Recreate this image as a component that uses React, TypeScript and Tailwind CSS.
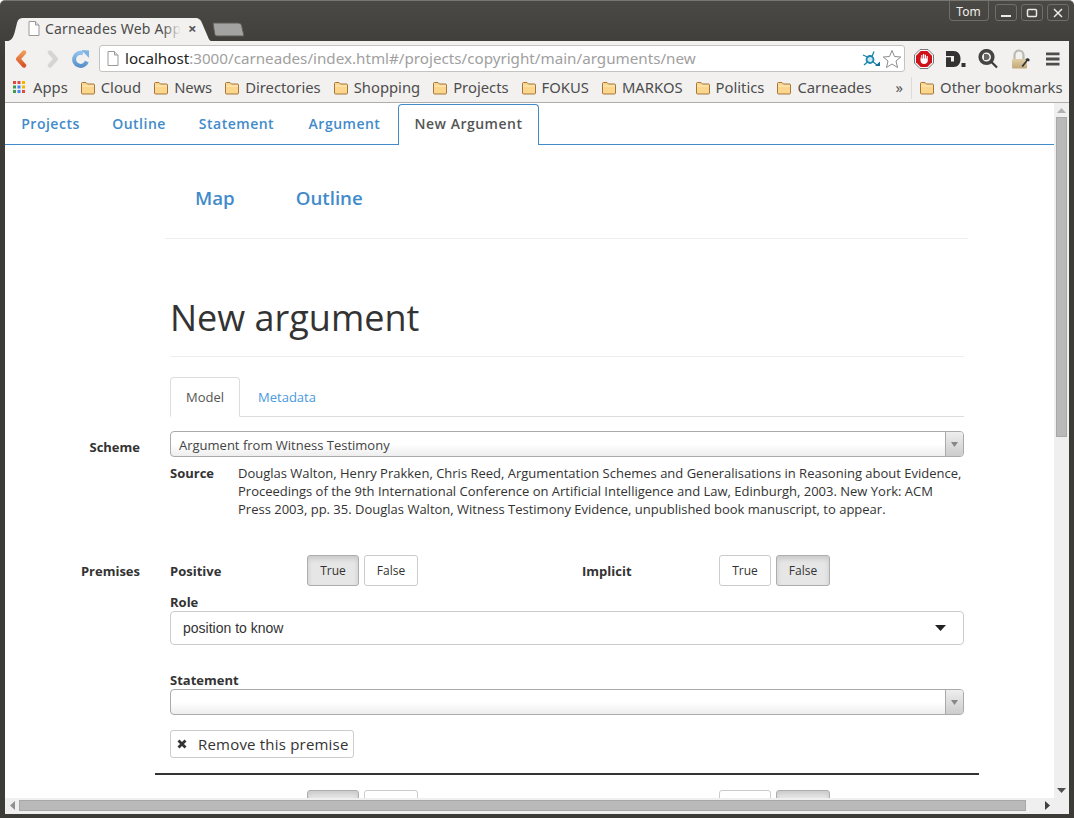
import React from "react";

const ui = "font-['Noto_Sans','Open_Sans',sans-serif]";

function Folder() {
  return (
    <svg width="16" height="14" viewBox="0 0 16 14" className="shrink-0">
      <path d="M1.5 12V2.5C1.5 1.900 1.900 1.5 2.500 1.5H6L7.500 3H13.500C14.100 3 14.500 3.400 14.500 4V12C14.500 12.600 14.100 13 13.500 13H2.500C1.900 13 1.500 12.600 1.500 12Z" fill="#fbd68c" stroke="#a5763a" />
      <path d="M2 5H14" stroke="#fdebc4" />
    </svg>
  );
}

function Bookmark({ label, className = "" }: { label: string; className?: string }) {
  return (
    <div className={`flex items-center gap-[5px] ${className}`}>
      <Folder />
      <span>{label}</span>
    </div>
  );
}

function PageIcon({ className = "" }: { className?: string }) {
  return (
    <svg width="12" height="15" viewBox="0 0 12 15" className={className}>
      <path d="M1 .5H7.500L11 4V14.500H1Z" fill="#fff" stroke="#9a9a9a" />
      <path d="M7.500 .5V4H11" fill="#e4e4e4" stroke="#9a9a9a" />
    </svg>
  );
}

function Segmented({ active, labels = true }: { active: "true" | "false"; labels?: boolean }) {
  const on = "bg-[#e6e6e6] border-[#adadad] shadow-[inset_0_3px_5px_rgba(0,0,0,0.125)]";
  const off = "bg-white border-[#cccccc]";
  return (
    <div className="flex gap-[5px]">
      <div className={`w-[52px] h-[31px] border rounded-[3px] flex items-center justify-center ${active === "true" ? on : off}`}>{labels && "True"}</div>
      <div className={`w-[54px] h-[31px] border rounded-[3px] flex items-center justify-center ${active === "false" ? on : off}`}>{labels && "False"}</div>
    </div>
  );
}

function Combo({ value, h }: { value?: string; h: string }) {
  return (
    <div className={`${h} border border-[#aaaaaa] rounded-[4px] flex overflow-hidden bg-gradient-to-b from-white from-50% to-[#eeeeee]`}>
      <div className="flex-1 pl-[8px] pt-[3px] flex items-center text-[13px] text-[#444444]">{value}</div>
      <div className="w-[18px] border-l border-[#aaaaaa] bg-gradient-to-b from-[#eeeeee] to-[#cccccc] flex items-center justify-center">
        <svg width="7" height="5" viewBox="0 0 7 5"><path d="M0 0H7L3.500 5Z" fill="#888888" /></svg>
      </div>
    </div>
  );
}

export default function App() {
  return (
    <div className={`w-[1074px] h-[818px] overflow-hidden bg-gradient-to-b from-[#4a4945] to-[#3c3b37] to-[60px] flex flex-col rounded-t-[5px] border-t border-[#77766f] ${ui}`}>
      {/* title bar */}
      <div className="h-[40px] shrink-0 flex items-start justify-between pr-[5px]">
        <div className="relative ml-[4px] mt-[16px] flex items-start">
          <div className="relative w-[209px] h-[25px]">
            <svg width="209" height="25" viewBox="0 0 209 25" className="absolute left-0 top-0">
              <path d="M0 25C7 24 9 22 11 14L13 6C14 2 16 1 20 1H191C195 1 197 3 198 6L204 20C205 23 206 24 209 25Z" fill="#f2f1f0" />
            </svg>
            <div className="relative flex items-center h-[23px] pl-[24px] pr-[14px] gap-[5px]">
              <PageIcon />
              <div className="relative w-[136px] h-[20px] leading-[19px] overflow-hidden">
                <span className="text-[14px] text-[#4c4c4c] whitespace-nowrap tracking-[0.2px]">Carneades Web App</span>
                <div className="absolute right-0 top-0 bottom-0 w-[18px] bg-gradient-to-r from-transparent to-[#f2f1f0]"></div>
              </div>
              <span className="text-[#555555] text-[15px] leading-none font-bold ml-[2px]">×</span>
            </div>
          </div>
          <svg width="32" height="15" viewBox="0 0 32 15" className="-ml-[1px] mt-[5px]">
            <path d="M1 1H26C28 1 29 2 29.500 3L32 14H5C3 14 3 13 2.500 11Z" fill="#a3a3a1" stroke="#5c5b57" />
          </svg>
        </div>
        <div className="flex items-start text-[12px] text-[#f0efec] gap-[4px]">
          <div className="w-[40px] h-[20px] pt-[2px] pr-[1px] border border-t-0 border-[#6f6e6a] rounded-b-[4px] mr-[2px] flex items-center justify-center">Tom</div>
          {[0, 1, 2].map((i) => (
            <div key={i} className="w-[22px] h-[17px] mt-[3px] border border-[#6f6e6a] rounded-[3px] flex items-center justify-center">
              <svg width="12" height="10" viewBox="0 0 12 10">
                {i === 0 && <path d="M1 8H11" stroke="#ecebe8" strokeWidth="2" />}
                {i === 1 && <rect x="1.500" y="1.500" width="9" height="7" rx="1" fill="none" stroke="#ecebe8" strokeWidth="1.500" />}
                {i === 2 && <path d="M2 1L10 9M10 1L2 9" stroke="#ecebe8" strokeWidth="1.500" />}
              </svg>
            </div>
          ))}
        </div>
      </div>

      {/* window body */}
      <div className="flex-1 min-h-0 ml-[5px] mr-[5px] mb-[4px] flex flex-col bg-[#f2f1f0]">
        {/* toolbar */}
        <div className="h-[35px] shrink-0 flex items-center pl-[10px]">
          <svg width="12" height="18" viewBox="0 0 12 18" className="shrink-0">
            <defs>
              <linearGradient id="backG" x1="0" y1="0" x2="0" y2="1">
                <stop offset="0" stopColor="#ef9a55" />
                <stop offset="1" stopColor="#d9542b" />
              </linearGradient>
            </defs>
            <path d="M9 2.500L3.200 9L9 15.500H8.999" fill="none" stroke="url(#backG)" strokeWidth="4.400" strokeLinecap="round" strokeLinejoin="round" />
          </svg>
          <svg width="12" height="18" viewBox="0 0 12 18" className="ml-[20px] shrink-0">
            <path d="M3 2.500L8.800 9L3 15.500" fill="none" stroke="#d6d5d3" strokeWidth="4.400" strokeLinecap="round" strokeLinejoin="round" />
          </svg>
          <svg width="18" height="18" viewBox="0 0 18 18" className="ml-[13px] shrink-0">
            <defs>
              <linearGradient id="reloadG" x1="0" y1="0" x2="0" y2="1">
                <stop offset="0" stopColor="#8fc0ea" />
                <stop offset="1" stopColor="#5a93cc" />
              </linearGradient>
            </defs>
            <path d="M14.800 11.500A6.500 6.500 0 1 1 11 3.300" fill="none" stroke="url(#reloadG)" strokeWidth="4" />
            <path d="M9.500 0L17 0.500V8Z" fill="#7fb2e0" />
          </svg>
          <div className="ml-[9px] w-[806px] h-[27px] bg-white border border-[#c4c3c0] rounded-[3px] flex items-center pl-[7px] pr-[2px]">
            <PageIcon />
            <div className="ml-[6px] flex-1 text-[15.2px] whitespace-nowrap overflow-hidden text-[#a0a0a0]">
              <span className="text-[#222222]">localhost</span>:3000/carneades/index.html#/projects/copyright/main/arguments/new
            </div>
            <svg width="20" height="20" viewBox="0 0 20 20" className="mr-[1px]">
              <circle cx="9" cy="10.500" r="3.500" fill="#cfe8f2" stroke="#1a86ad" strokeWidth="1.800" />
              <path d="M11 7.500L13 2.500M6.500 8L2 6M6.500 13L3 16M11 12L16 16" stroke="#1a86ad" strokeWidth="1.300" />
              <path d="M14 17H19V12.500Z" fill="#1a6f96" />
            </svg>
            <svg width="20" height="20" viewBox="0 0 20 20">
              <path d="M10 1.500L12.500 7.500L18.800 8L14 12L15.500 18.500L10 15L4.500 18.500L6 12L1.200 8L7.500 7.500Z" fill="#fff" stroke="#8c8c8c" />
            </svg>
          </div>
          <svg width="20" height="20" viewBox="0 0 20 20" className="ml-[9px] shrink-0">
            <path d="M6 .5H14L19.500 6V14L14 19.500H6L.5 14V6Z" fill="#fff" stroke="#777" />
            <path d="M6.700 2H13.300L18 6.700V13.300L13.300 18H6.700L2 13.300V6.700Z" fill="#d0121b" />
            <path d="M6.500 8V11.500C6.500 13.500 8 15 10 15C12.200 15 13.800 13.500 13.800 11.500V7H12.600V9.500H12V5.800H10.800V9.500H10.200V5H9V9.500H8.400V6H7.300V10L6.500 8Z" fill="#fff" />
          </svg>
          <svg width="20" height="18" viewBox="0 0 20 18" className="ml-[12px] shrink-0">
            <path d="M0 1H7.500C12 1 14.500 4.500 14.500 9C14.500 13.500 12 17 7.500 17H0Z" fill="#333" />
            <path d="M0 6H8V11.500H5V7.200H0Z" fill="#f2f1f0" />
            <rect x="15.500" y="13" width="4" height="4" fill="#333" />
          </svg>
          <svg width="21" height="20" viewBox="0 0 21 20" className="ml-[12px] shrink-0">
            <circle cx="8.500" cy="8" r="6.300" fill="none" stroke="#444" strokeWidth="3.600" />
            <path d="M13 12.500L19 18.500" stroke="#3a3a3a" strokeWidth="2.200" />
            <path d="M6 5H8.500C10.500 5 11.500 6.500 11.500 8C11.500 9.500 10.500 11 8.500 11H6Z" fill="#666" />
          </svg>
          <svg width="20" height="20" viewBox="0 0 20 20" className="ml-[12px] shrink-0">
            <defs>
              <linearGradient id="lockG" x1="0" y1="0" x2="0" y2="1">
                <stop offset="0" stopColor="#e0cfa6" />
                <stop offset="1" stopColor="#c2a877" />
              </linearGradient>
            </defs>
            <path d="M3.500 10V6.500C3.500 3.500 5.500 1.500 8 1.500C10.500 1.500 12.500 3.500 12.500 6.500V10" fill="none" stroke="#bcb9af" strokeWidth="2.200" />
            <rect x="1" y="10" width="15" height="9.500" rx="1" fill="url(#lockG)" />
            <path d="M10.500 17L15 11.500L14.500 10L17 9L19 11L17.500 12.500L16.500 12L12 18Z" fill="#333" />
          </svg>
          <svg width="14" height="14" viewBox="0 0 14 14" className="ml-[15px] shrink-0">
            <path d="M0 1.800H13.500M0 7H13.500M0 12.200H13.500" stroke="#4d4d4d" strokeWidth="2.800" />
          </svg>
        </div>

        {/* bookmarks */}
        <div className="h-[27px] shrink-0 flex items-center pl-[8px] pb-[3px] text-[14.8px] text-[#4d4d4d] border-b border-[#aeaeac]">
          <svg width="13" height="13" viewBox="0 0 13 13" className="shrink-0">
            {[0, 1, 2].flatMap((r) =>
              [0, 1, 2].map((c) => (
                <rect key={`${r}${c}`} x={c * 4.5} y={r * 4.5} width="3" height="3"
                  fill={[["#e04a3f", "#e04a3f", "#f4b400"], ["#3e9b4f", "#4285f4", "#f4b400"], ["#3e9b4f", "#4285f4", "#e04a3f"]][r][c]} />
              ))
            )}
          </svg>
          <span className="ml-[7px]">Apps</span>
          <div className="flex items-center gap-[12px] ml-[12px]">
            {["Cloud", "News", "Directories", "Shopping", "Projects", "FOKUS", "MARKOS", "Politics", "Carneades"].map((b) => (
              <Bookmark key={b} label={b} />
            ))}
          </div>
          <span className="ml-[24px] text-[#555555]">»</span>
          <div className="ml-[8px] h-[22px] w-px bg-[#dcdbd9]"></div>
          <Bookmark label="Other bookmarks" className="ml-[7px]" />
        </div>

        {/* viewport */}
        <div className="flex-1 min-h-0 flex flex-col bg-white">
          <div className="flex-1 min-h-0 flex">
            <div className="flex-1 min-w-0 overflow-hidden font-['Open_Sans',sans-serif] text-[13px] text-[#333333]">
              {/* top tabs */}
              <div className="h-[42px] pt-[1px] flex items-stretch border-b border-[#428bca] text-[14px] font-semibold text-[#428bca] tracking-[0.5px]">
                {[["Projects", "w-[91px]"], ["Outline", "w-[86px]"], ["Statement", "w-[109px]"], ["Argument", "w-[107px]"]].map(([t, w]) => (
                  <div key={t} className={`${w} pb-[2px] flex items-center justify-center`}>{t}</div>
                ))}
                <div className="w-[141px] h-[41px] pb-[3px] border border-b-0 border-[#428bca] rounded-t-[4px] bg-white text-[#555555] flex items-center justify-center">New Argument</div>
              </div>

              <div className="pl-[160px] w-[1000px]">
                {/* map / outline */}
                <div className="w-[803px] h-[94px] pt-[14px] border-b border-[#eeeeee] flex items-center pl-[30px] gap-[61px] text-[18.7px] font-semibold text-[#428bca]">
                  <span>Map</span>
                  <span>Outline</span>
                </div>

                <div className="ml-[5px] w-[794px]">
                  <h1 className="mt-[54px] h-[64px] border-b border-[#eeeeee] text-[36px] leading-[50px] text-[#333333]">New argument</h1>

                  {/* tabs */}
                  <div className="mt-[20px] h-[40px] border-b border-[#dddddd] flex items-stretch">
                    <div className="w-[70px] h-[40px] pt-[1px] border border-[#dddddd] border-b-white rounded-t-[4px] flex items-center justify-center text-[#555555]">Model</div>
                    <div className="w-[94px] pt-[2px] flex items-center justify-center text-[#4a9ae0]">Metadata</div>
                  </div>

                  {/* scheme */}
                  <div className="relative mt-[14px]">
                    <div className="absolute -left-[170px] w-[140px] top-[7px] text-right font-bold">Scheme</div>
                    <Combo value="Argument from Witness Testimony" h="h-[26px]" />
                  </div>
                  <div className="flex mt-[7px] leading-[18px]">
                    <div className="w-[68px] shrink-0 font-bold">Source</div>
                    <div className="w-[726px]">
                      Douglas Walton, Henry Prakken, Chris Reed, Argumentation Schemes and Generalisations in Reasoning about Evidence, Proceedings of the 9th International Conference on Artificial Intelligence and Law, Edinburgh, 2003. New York: ACM Press 2003, pp. 35. Douglas Walton, Witness Testimony Evidence, unpublished book manuscript, to appear.
                    </div>
                  </div>

                  {/* premises */}
                  <div className="relative mt-[37px] h-[31px] flex items-center">
                    <div className="absolute -left-[170px] top-[7px] w-[140px] text-right font-bold">Premises</div>
                    <div className="w-[137px] pt-[2px] font-bold">Positive</div>
                    <div className="w-[275px] text-[12px]"><Segmented active="true" /></div>
                    <div className="w-[137px] pt-[2px] font-bold">Implicit</div>
                    <div className="text-[12px]"><Segmented active="false" /></div>
                  </div>

                  <div className="mt-[8px] h-[17px] leading-[17px] font-bold">Role</div>
                  <div className="h-[34px] border border-[#cccccc] rounded-[4px] flex items-center justify-between pl-[12px] pr-[17px] font-['Liberation_Sans',sans-serif] text-[14px] text-[#333333]">
                    <span>position to know</span>
                    <svg width="11" height="6" viewBox="0 0 11 6"><path d="M0 0H11L5.500 6Z" fill="#222222" /></svg>
                  </div>

                  <div className="mt-[26px] h-[18px] leading-[18px] font-bold">Statement</div>
                  <Combo h="h-[26px]" />

                  <div className="mt-[15px] w-[184px] h-[28px] border border-[#cccccc] rounded-[3px] flex items-center pl-[5px] text-[15px] tracking-[0.2px]">
                    <svg width="12" height="12" viewBox="0 0 12 12" className="mr-[10px]">
                      <path d="M2.500 2.500L9.500 9.500M9.500 2.500L2.500 9.500" stroke="#333333" strokeWidth="2.800" />
                    </svg>
                    Remove this premise
                  </div>

                  <div className="-ml-[15px] w-[824px] mt-[15px] h-[2px] bg-[#333333]"></div>

                  <div className="relative mt-[15px] h-[31px] flex">
                    <div className="ml-[137px] w-[275px] text-[12px]"><Segmented active="true" labels={false} /></div>
                    <div className="ml-[137px] text-[12px]"><Segmented active="false" labels={false} /></div>
                  </div>
                </div>
              </div>
            </div>

            {/* vertical scrollbar */}
            <div className="w-[15px] shrink-0 bg-[#efefef] flex flex-col items-center">
              <svg width="9" height="5" viewBox="0 0 9 5" className="mt-[5px]"><path d="M0 5H9L4.500 0Z" fill="#b0b0b0" /></svg>
              <div className="mt-[4px] w-[11px] h-[320px] bg-[#b9b9b9] border border-[#a8a8a8]"></div>
              <div className="flex-1"></div>
              <svg width="9" height="5" viewBox="0 0 9 5" className="mb-[5px]"><path d="M0 0H9L4.500 5Z" fill="#505050" /></svg>
            </div>
          </div>
          {/* horizontal scrollbar */}
          <div className="h-[16px] pb-[3px] shrink-0 bg-[#efefef] flex items-end">
            <svg width="5" height="9" viewBox="0 0 5 9" className="ml-[5px] mb-[1px]"><path d="M5 0V9L0 4.500Z" fill="#909090" /></svg>
            <div className="ml-[4px] w-[1007px] h-[11px] bg-[#b9b9b9] border border-[#a8a8a8]"></div>
            <svg width="5" height="9" viewBox="0 0 5 9" className="ml-[19px] mb-[1px]"><path d="M0 0V9L5 4.500Z" fill="#404040" /></svg>
          </div>
        </div>
      </div>
    </div>
  );
}
